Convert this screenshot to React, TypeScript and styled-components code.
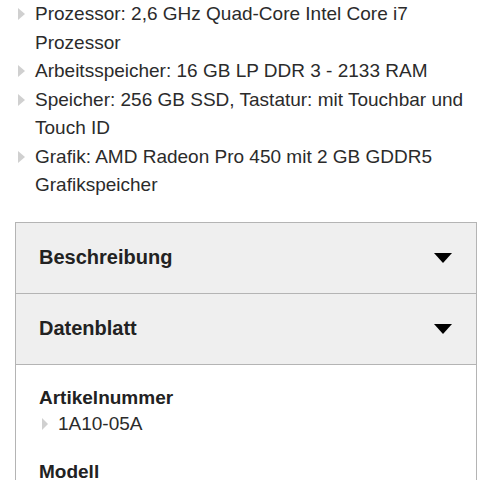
import React from "react";
import styled, { createGlobalStyle } from "styled-components";

const Global = createGlobalStyle`
  html, body { margin: 0; padding: 0; background: #fff; }
  body { font-family: "Liberation Sans", Arial, Helvetica, sans-serif; color: #2b2b2b; }
`;

const Page = styled.div`
  width: 480px;
  height: 480px;
  overflow: hidden;
  display: flex;
  flex-direction: column;
`;

const Features = styled.ul`
  list-style: none;
  margin: 0;
  padding: 0 10px 0 35px;
  font-size: 19px;
  line-height: 28.5px;
`;

const Bullet = styled.span<{ $small?: boolean }>`
  position: absolute;
  left: ${(p) => (p.$small ? "-16px" : "-17px")};
  top: ${(p) => (p.$small ? "9px" : "8px")};
  width: 0;
  height: 0;
  border-top: ${(p) => (p.$small ? "6px" : "6.5px")} solid transparent;
  border-bottom: ${(p) => (p.$small ? "6px" : "6.5px")} solid transparent;
  border-left: ${(p) => (p.$small ? "6px" : "7px")} solid #d0d0d0;
`;

const Feature = styled.li`
  position: relative;
`;

const Accordion = styled.div`
  margin: 22px 3px 0 15px;
  border: 1px solid #b4b4b4;
  border-bottom: none;
  flex: 1;
  display: flex;
  flex-direction: column;
`;

const Header = styled.div`
  height: 70px;
  background: #efefef;
  border-bottom: 1px solid #b4b4b4;
  display: flex;
  align-items: center;
  justify-content: space-between;
  padding: 0 24px 0 23px;
  &:last-of-type { border-bottom: none; height: 71px; }
`;

const HeaderTitle = styled.span`
  font-weight: bold;
  font-size: 20px;
  color: #222;
`;

const Caret = styled.span`
  width: 0;
  height: 0;
  border-left: 9.5px solid transparent;
  border-right: 9.5px solid transparent;
  border-top: 10px solid #000;
`;

const Body = styled.div`
  padding: 22px 23px 0 23px;
  flex: 1;
`;

const Label = styled.div`
  font-weight: bold;
  font-size: 19px;
  line-height: 22px;
  color: #222;
`;

const Values = styled.ul`
  list-style: none;
  margin: 0 0 22px 0;
  padding: 0 0 0 19px;
  font-size: 19px;
  line-height: 30px;
`;

const features = [
  "Prozessor: 2,6 GHz Quad-Core Intel Core i7 Prozessor",
  "Arbeitsspeicher: 16 GB LP DDR 3 - 2133 RAM",
  "Speicher: 256 GB SSD, Tastatur: mit Touchbar und Touch ID",
  "Grafik: AMD Radeon Pro 450 mit 2 GB GDDR5 Grafikspeicher",
];

export default function App() {
  return (
    <Page>
      <Global />
      <Features>
        {features.map((f) => (
          <Feature key={f}>
            <Bullet />
            {f}
          </Feature>
        ))}
      </Features>
      <Accordion>
        <Header>
          <HeaderTitle>Beschreibung</HeaderTitle>
          <Caret />
        </Header>
        <Header>
          <HeaderTitle>Datenblatt</HeaderTitle>
          <Caret />
        </Header>
        <Body>
          <Label>Artikelnummer</Label>
          <Values>
            <Feature>
              <Bullet $small />
              1A10-05A
            </Feature>
          </Values>
          <Label>Modell</Label>
        </Body>
      </Accordion>
    </Page>
  );
}
